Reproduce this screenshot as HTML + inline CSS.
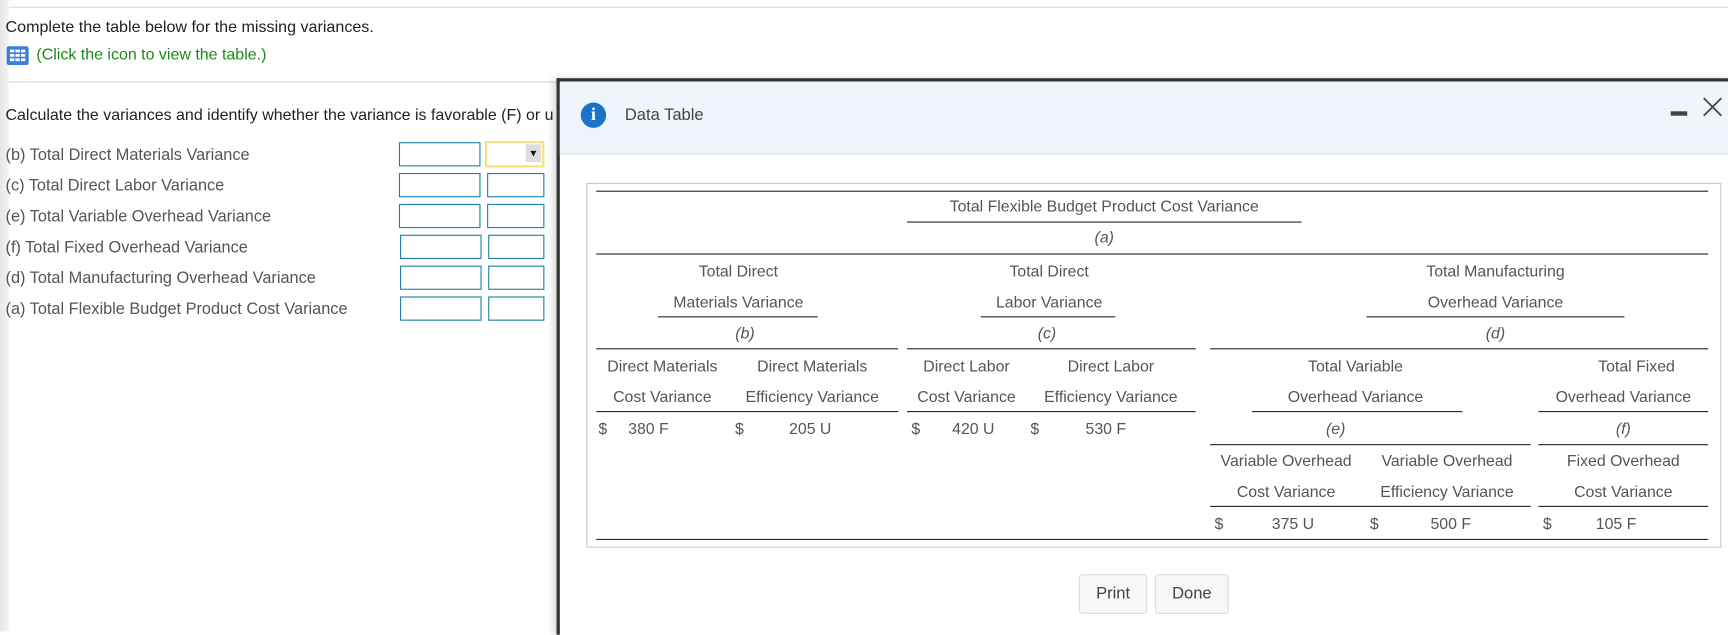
<!DOCTYPE html>
<html><head><meta charset="utf-8"><style>
html,body{margin:0;padding:0;width:1728px;height:631px;overflow:hidden;background:#fff}
#w{position:absolute;left:0;top:0;width:1568px;height:573px;transform:scale(1.10204);transform-origin:0 0;font-family:"Liberation Sans",Arial,sans-serif}
.a{position:absolute;white-space:nowrap}
.c{position:absolute;white-space:nowrap;transform:translate(-50%,-50%);font-size:14.4px;color:#555}
.t{position:absolute;white-space:nowrap;transform:translateY(-50%);font-size:14.4px;color:#555}
.lb{font-size:14.8px}
.i{font-style:italic}
.l{position:absolute;height:1px;background:#222}
.in{position:absolute;height:20px;border:1px solid #1a7fa6;background:#fff}
.btn{position:absolute;top:521px;height:34px;border:1px solid #ddd;border-radius:3px;background:#f7f7f7;font-size:15px;color:#444;text-align:center;line-height:34px}
</style></head><body><div id="w">
<div class="a" style="left:0;top:0;width:8px;height:573px;background:linear-gradient(90deg,#e6e6e6,#f4f4f4)"></div>
<div class="a" style="left:8px;top:6px;width:1560px;height:1px;background:#d3d8e0"></div>
<div class="a" style="left:5px;top:17px;font-size:14.6px;color:#222">Complete the table below for the missing variances.</div>
<div class="a" style="left:6px;top:42px;width:20px;height:17px;background:#3b7fd6;border-radius:2px"><svg width="20" height="17" viewBox="0 0 20 17"><g fill="#fff"><rect x="3" y="3" width="4" height="2.5"/><rect x="8" y="3" width="4" height="2.5"/><rect x="13" y="3" width="4" height="2.5"/><rect x="3" y="7" width="4" height="2.5"/><rect x="8" y="7" width="4" height="2.5"/><rect x="13" y="7" width="4" height="2.5"/><rect x="3" y="11" width="4" height="2.5"/><rect x="8" y="11" width="4" height="2.5"/><rect x="13" y="11" width="4" height="2.5"/></g></svg></div>
<div class="a" style="left:33px;top:42px;font-size:14.5px;color:#1a8a1a">(Click the icon to view the table.)</div>
<div class="a" style="left:8px;top:74px;width:500px;height:1px;background:#d3d8e0"></div>
<div class="a" style="left:5px;top:97px;font-size:14.5px;color:#222">Calculate the variances and identify whether the variance is favorable (F) or u</div>
<div class="t lb" style="left:5px;top:141px">(b) Total Direct Materials Variance</div>
<div class="t lb" style="left:5px;top:169px">(c) Total Direct Labor Variance</div>
<div class="t lb" style="left:5px;top:197px">(e) Total Variable Overhead Variance</div>
<div class="t lb" style="left:5px;top:225px">(f) Total Fixed Overhead Variance</div>
<div class="t lb" style="left:5px;top:253px">(d) Total Manufacturing Overhead Variance</div>
<div class="t lb" style="left:5px;top:281px">(a) Total Flexible Budget Product Cost Variance</div>
<div class="in" style="left:362px;top:129px;width:72px"></div>
<div class="in" style="left:440px;top:128px;width:50px;height:20px;border:2px solid #f5e27a"><div style="position:absolute;right:1px;top:1px;width:14px;height:16px;background:#ddd;font-size:9px;text-align:center;line-height:16px;color:#111">▼</div></div>
<div class="in" style="left:362px;top:157px;width:72px"></div><div class="in" style="left:442px;top:157px;width:50px"></div>
<div class="in" style="left:362px;top:185px;width:72px"></div><div class="in" style="left:442px;top:185px;width:50px"></div>
<div class="in" style="left:363px;top:213px;width:72px"></div><div class="in" style="left:443px;top:213px;width:49px"></div>
<div class="in" style="left:363px;top:241px;width:72px"></div><div class="in" style="left:443px;top:241px;width:49px"></div>
<div class="in" style="left:363px;top:269px;width:72px"></div><div class="in" style="left:443px;top:269px;width:49px"></div>

<div class="a" style="left:505px;top:71px;width:1063px;height:502px;background:#fff;border-left:3px solid #333;border-top:3px solid #333;box-shadow:-3px 0 6px rgba(0,0,0,.15)"></div>
<div class="a" style="left:508px;top:74px;width:1060px;height:65px;background:#f0f5fc;border-bottom:1px solid #cfdcea"></div>
<div class="a" style="left:527px;top:93px;width:23px;height:23px;border-radius:50%;background:#1a73c9;color:#fff;font:bold 16px 'Liberation Serif',serif;text-align:center;line-height:23px">i</div>
<div class="a" style="left:567px;top:96px;font-size:15px;color:#444">Data Table</div>
<div class="a" style="left:1516px;top:101px;width:15px;height:4px;background:#444"></div>
<svg class="a" style="left:1545px;top:88px" width="18" height="18" viewBox="0 0 18 18"><path d="M1 1L17 17M17 1L1 17" stroke="#444" stroke-width="1.6"/></svg>

<div class="a" style="left:532px;top:166px;width:1028px;height:329px;border:1px solid #c8c8c8"></div>
<div class="l" style="left:541px;top:173px;width:1009px"></div>
<div class="c" style="left:1002px;top:188px">Total Flexible Budget Product Cost Variance</div>
<div class="l" style="left:823px;top:201px;width:358px"></div>
<div class="c i" style="left:1002px;top:216px">(a)</div>
<div class="l" style="left:541px;top:230px;width:1009px"></div>
<div class="c" style="left:670px;top:247px">Total Direct</div>
<div class="c" style="left:952px;top:247px">Total Direct</div>
<div class="c" style="left:1357px;top:247px">Total Manufacturing</div>
<div class="c" style="left:670px;top:275px">Materials Variance</div>
<div class="c" style="left:952px;top:275px">Labor Variance</div>
<div class="c" style="left:1357px;top:275px">Overhead Variance</div>
<div class="l" style="left:597px;top:287px;width:145px"></div>
<div class="l" style="left:890px;top:287px;width:122px"></div>
<div class="l" style="left:1240px;top:287px;width:234px"></div>
<div class="c i" style="left:676px;top:303px">(b)</div>
<div class="c i" style="left:950px;top:303px">(c)</div>
<div class="c i" style="left:1357px;top:303px">(d)</div>
<div class="l" style="left:541px;top:316px;width:274px"></div>
<div class="l" style="left:823px;top:316px;width:262px"></div>
<div class="l" style="left:1098px;top:316px;width:452px"></div>
<div class="c" style="left:601px;top:333px">Direct Materials</div>
<div class="c" style="left:737px;top:333px">Direct Materials</div>
<div class="c" style="left:877px;top:333px">Direct Labor</div>
<div class="c" style="left:1008px;top:333px">Direct Labor</div>
<div class="c" style="left:1230px;top:333px">Total Variable</div>
<div class="c" style="left:1485px;top:333px">Total Fixed</div>
<div class="c" style="left:601px;top:361px">Cost Variance</div>
<div class="c" style="left:737px;top:361px">Efficiency Variance</div>
<div class="c" style="left:877px;top:361px">Cost Variance</div>
<div class="c" style="left:1008px;top:361px">Efficiency Variance</div>
<div class="c" style="left:1230px;top:361px">Overhead Variance</div>
<div class="c" style="left:1473px;top:361px">Overhead Variance</div>
<div class="l" style="left:541px;top:373px;width:274px"></div>
<div class="l" style="left:823px;top:373px;width:262px"></div>
<div class="l" style="left:1136px;top:373px;width:191px"></div>
<div class="l" style="left:1396px;top:373px;width:154px"></div>
<div class="t" style="left:543px;top:390px">$</div><div class="t" style="left:570px;top:390px">380 F</div>
<div class="t" style="left:667px;top:390px">$</div><div class="t" style="left:716px;top:390px">205 U</div>
<div class="t" style="left:827px;top:390px">$</div><div class="t" style="left:864px;top:390px">420 U</div>
<div class="t" style="left:935px;top:390px">$</div><div class="t" style="left:985px;top:390px">530 F</div>
<div class="c i" style="left:1212px;top:390px">(e)</div>
<div class="c i" style="left:1473px;top:390px">(f)</div>
<div class="l" style="left:1098px;top:403px;width:291px"></div>
<div class="l" style="left:1396px;top:403px;width:154px"></div>
<div class="c" style="left:1167px;top:419px">Variable Overhead</div>
<div class="c" style="left:1313px;top:419px">Variable Overhead</div>
<div class="c" style="left:1473px;top:419px">Fixed Overhead</div>
<div class="c" style="left:1167px;top:447px">Cost Variance</div>
<div class="c" style="left:1313px;top:447px">Efficiency Variance</div>
<div class="c" style="left:1473px;top:447px">Cost Variance</div>
<div class="l" style="left:1098px;top:459px;width:291px"></div>
<div class="l" style="left:1396px;top:459px;width:154px"></div>
<div class="t" style="left:1102px;top:476px">$</div><div class="t" style="left:1154px;top:476px">375 U</div>
<div class="t" style="left:1243px;top:476px">$</div><div class="t" style="left:1298px;top:476px">500 F</div>
<div class="t" style="left:1400px;top:476px">$</div><div class="t" style="left:1448px;top:476px">105 F</div>
<div class="l" style="left:541px;top:489px;width:1009px"></div>
<div class="btn" style="left:979px;width:60px">Print</div>
<div class="btn" style="left:1048px;width:65px">Done</div>
</div></body></html>
